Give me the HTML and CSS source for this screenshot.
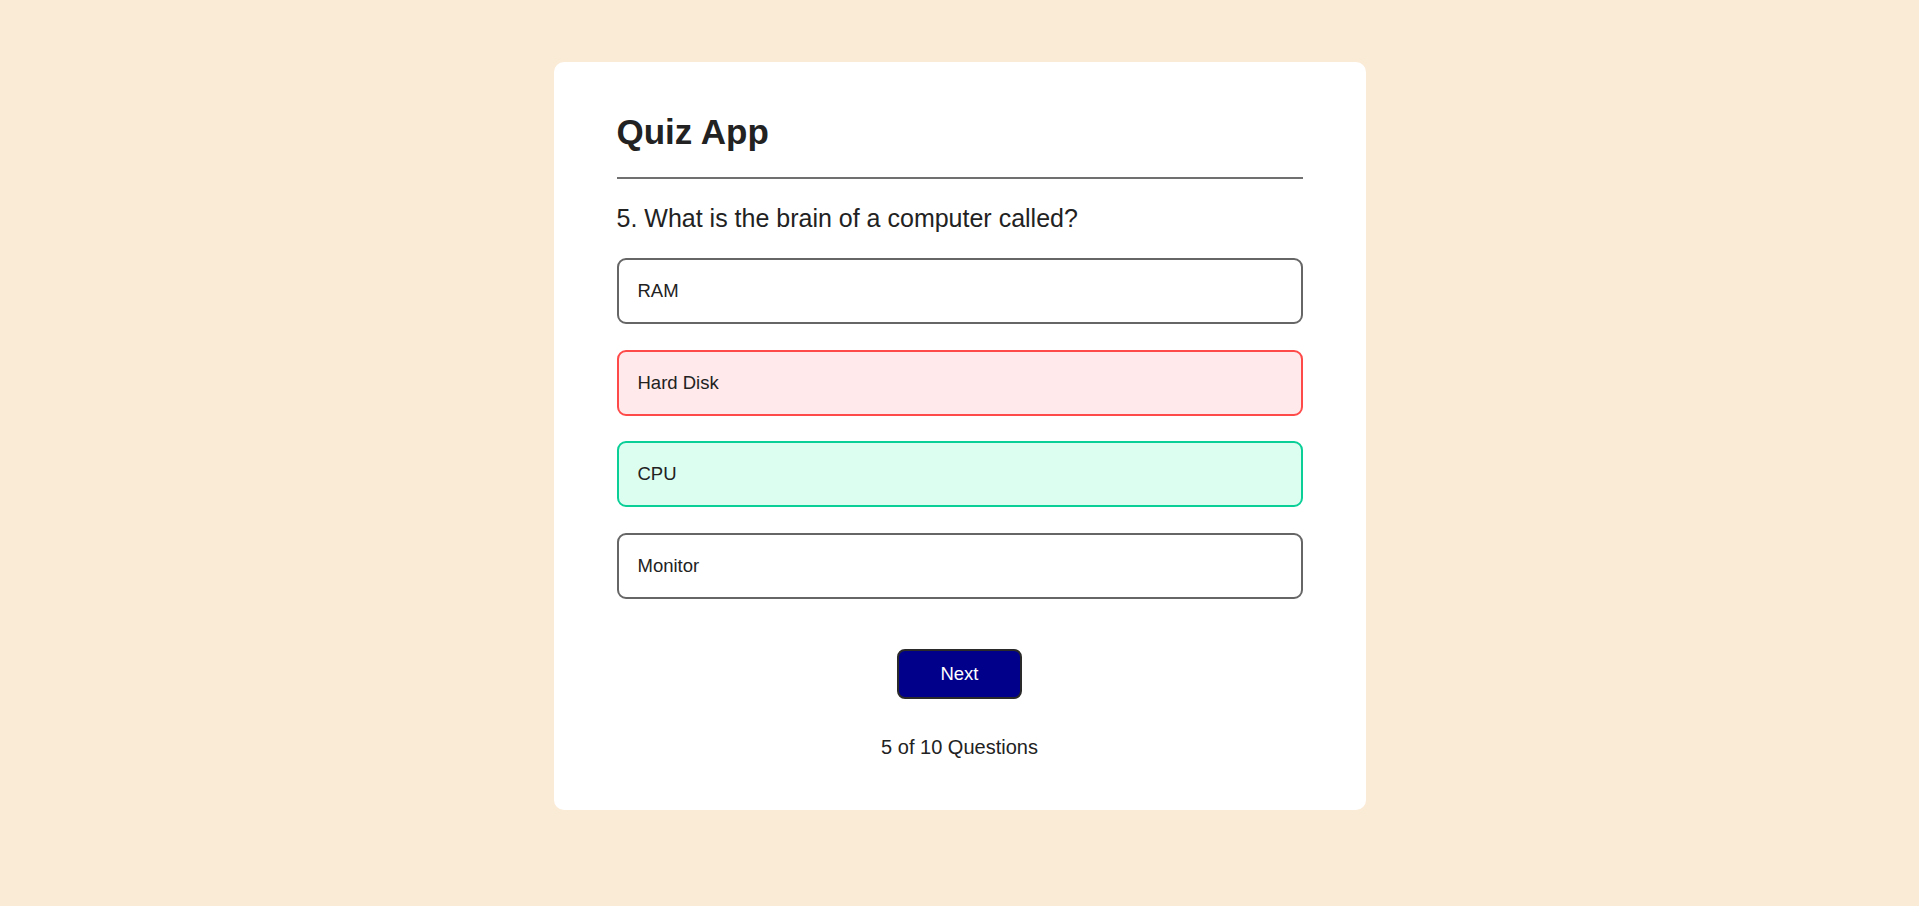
FILE: index.html
```html
<!DOCTYPE html>
<html lang="en">
<head>
<meta charset="UTF-8">
<title>Quiz App</title>
<link rel="stylesheet" href="styles.css">
</head>
<body>
  <main class="app">
    <h1 class="app-title">Quiz App</h1>
    <div class="quiz">
      <h2 class="question">5. What is the brain of a computer called?</h2>
      <div class="answers">
        <button class="answer">RAM</button>
        <button class="answer incorrect">Hard Disk</button>
        <button class="answer correct">CPU</button>
        <button class="answer">Monitor</button>
      </div>
      <div class="actions">
        <button class="next-btn">Next</button>
      </div>
      <p class="progress">5 of 10 Questions</p>
    </div>
  </main>
</body>
</html>
```

FILE: styles.css
```css
* {
  box-sizing: border-box;
}

html, body {
  margin: 0;
  padding: 0;
}

body {
  background: #faebd7;
  font-family: "Liberation Sans", Arial, sans-serif;
  color: #222;
  padding-top: 62px;
}

.app {
  width: 812px;
  margin: 0 auto;
  background: #fff;
  border-radius: 10px;
  padding: 50px 63px 51px;
}

.app-title {
  margin: 0;
  font-size: 35px;
  font-weight: 700;
  line-height: 39px;
  color: #222;
  padding-bottom: 26px;
  border-bottom: 2px solid #707070;
}

.question {
  margin: 24.5px 0 25.5px;
  font-size: 25px;
  font-weight: 400;
  line-height: 29px;
  color: #222;
}

.answers {
  display: flex;
  flex-direction: column;
  gap: 25.7px;
}

.answer {
  display: block;
  width: 100%;
  text-align: left;
  font-family: inherit;
  font-size: 18.5px;
  line-height: 22px;
  color: #222;
  background: #fff;
  border: 2px solid #666;
  border-radius: 9px;
  padding: 20px 19px;
  margin: 0;
  cursor: pointer;
}

.answer.incorrect {
  background: #ffe9ea;
  border-color: #ff4a4a;
}

.answer.correct {
  background: #dcfef1;
  border-color: #0acf97;
}

.actions {
  display: flex;
  justify-content: center;
  margin-top: 50px;
}

.next-btn {
  width: 125px;
  height: 50px;
  background: #00008b;
  color: #fff;
  font-family: inherit;
  font-size: 18.5px;
  border: 2px solid #2a2a2a;
  border-radius: 8px;
  cursor: pointer;
  padding: 0;
}

.progress {
  margin: 37px 0 0;
  text-align: center;
  font-size: 20px;
  line-height: 23px;
  color: #222;
}
```
